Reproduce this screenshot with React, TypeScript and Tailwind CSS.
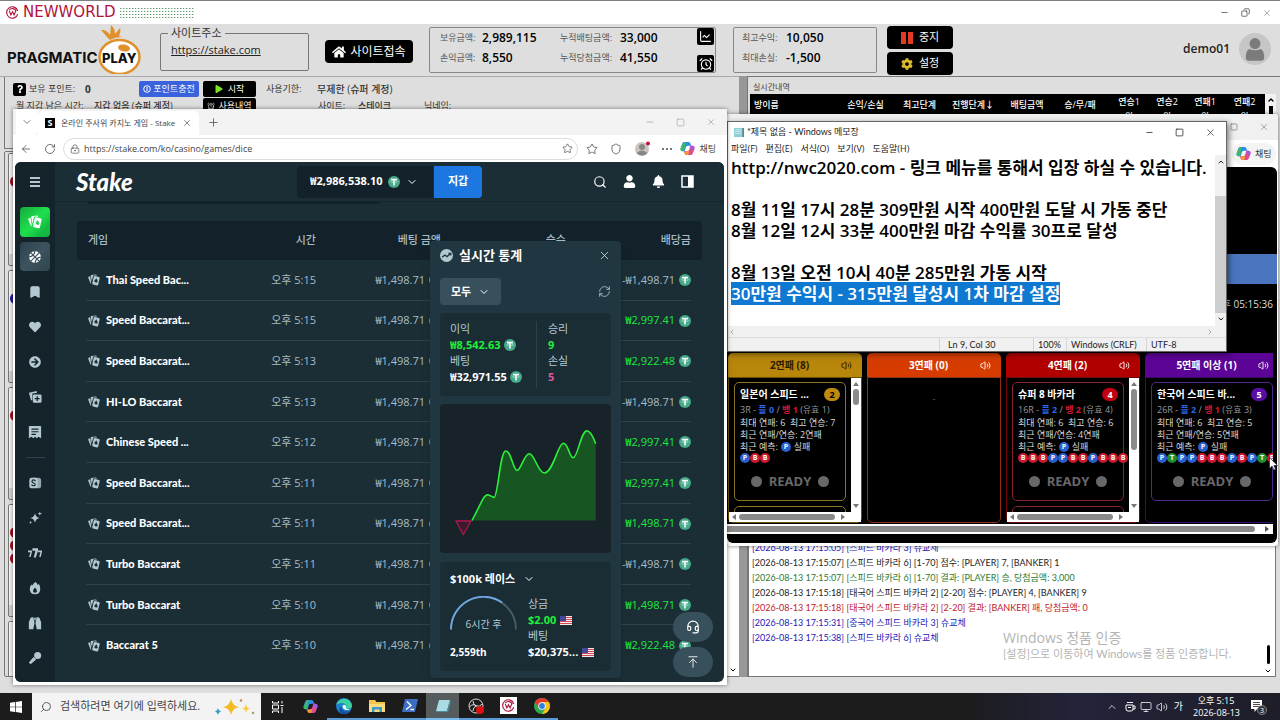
import { useEffect, useRef } from "react";
import type { ReactNode } from "react";
import {
  ArrowLeft,
  ArrowUpToLine,
  Bookmark,
  ChartLine,
  ChevronDown,
  ChevronLeft,
  ChevronRight,
  ChevronUp,
  AlarmClock,
  Copy,
  Headset,
  LockKeyhole,
  Minus,
  Monitor,
  Plus,
  RefreshCw,
  RotateCw,
  Search,
  Shield,
  Square,
  Star,
  Volume2,
  X,
} from "lucide-react";
import {
  FaBasketballBall,
  FaBell,
  FaCog,
  FaHeart,
  FaHome,
  FaPlay,
  FaQuestion,
  FaUser,
  FaArrowCircleRight,
} from "react-icons/fa";

type Bet = {
  game: string;
  time: string;
  payout: string;
  won: boolean;
};

const bets: Bet[] = [
  { game: "Thai Speed Bac...", time: "오후 5:15", payout: "-₩1,498.71", won: false },
  { game: "Speed Baccarat...", time: "오후 5:15", payout: "₩2,997.41", won: true },
  { game: "Speed Baccarat...", time: "오후 5:13", payout: "₩2,922.48", won: true },
  { game: "HI-LO Baccarat", time: "오후 5:13", payout: "-₩1,498.71", won: false },
  { game: "Chinese Speed ...", time: "오후 5:12", payout: "₩2,997.41", won: true },
  { game: "Speed Baccarat...", time: "오후 5:11", payout: "₩2,997.41", won: true },
  { game: "Speed Baccarat...", time: "오후 5:11", payout: "₩1,498.71", won: true },
  { game: "Turbo Baccarat", time: "오후 5:11", payout: "-₩1,498.71", won: false },
  { game: "Turbo Baccarat", time: "오후 5:10", payout: "₩1,498.71", won: true },
  { game: "Baccarat 5", time: "오후 5:10", payout: "₩2,922.48", won: true },
];

const logs = [
  { text: "[2026-08-13 17:15:05] [스피드 바카라 3] 슈교체", color: "text-[#2318b8]" },
  { text: "[2026-08-13 17:15:07] [스피드 바카라 6] [1-70] 점수: [PLAYER] 7, [BANKER] 1", color: "text-[#222222]" },
  { text: "[2026-08-13 17:15:07] [스피드 바카라 6] [1-70] 결과: [PLAYER] 승, 당첨금액: 3,000", color: "text-[#2c7a35]" },
  { text: "[2026-08-13 17:15:18] [태국어 스피드 바카라 2] [2-20] 점수: [PLAYER] 4, [BANKER] 9", color: "text-[#222222]" },
  { text: "[2026-08-13 17:15:18] [태국어 스피드 바카라 2] [2-20] 결과: [BANKER] 패, 당첨금액: 0", color: "text-[#c0202c]" },
  { text: "[2026-08-13 17:15:31] [중국어 스피드 바카라 3] 슈교체", color: "text-[#2318b8]" },
  { text: "[2026-08-13 17:15:38] [스피드 바카라 6] 슈교체", color: "text-[#2318b8]" },
];

const memo = [
  "http://nwc2020.com - 링크 메뉴를 통해서 입장 하실 수 있습니다.",
  "",
  "8월 11일 17시 28분 309만원 시작 400만원 도달 시 가동 중단",
  "8월 12일 12시 33분 400만원 마감 수익률 30프로 달성",
  "",
  "8월 13일 오전 10시 40분 285만원 가동 시작",
  "30만원 수익시 - 315만원 달성시 1차 마감 설정",
];

/* ---------- small drawings ---------- */

function Coin() {
  return (
    <svg viewBox="0 0 12 12" className="size-3 shrink-0">
      <circle cx="6" cy="6" r="6" fill="#45a98a" />
      <path d="M3 3.6h6M6 3.6V9.4" stroke="#fff" strokeWidth="1.5" />
      <ellipse cx="6" cy="5.6" rx="3.4" ry="0.9" fill="none" stroke="#e4f5ef" strokeWidth="0.5" />
    </svg>
  );
}

function Cards({ className }: { className: string }) {
  return (
    <svg viewBox="0 0 24 24" className={className} fill="currentColor">
      <path d="M.5 7.500q-.3-1.300.9-1.800L4.500 4.500 6.500 19q-1.300.3-1.900-1z" />
      <path d="M5.500 3.800q-.2-1.500 1.200-1.700L15.500.900q1.400-.1 1.700 1.200l.3 1.400-4.800-1q-2-.2-2.600 1.700L7.500 15z" />
      <path
        fillRule="evenodd"
        d="m13.600 4 8.400 2q1.800.500 1.400 2.300L20.300 21.500q-.5 1.700-2.300 1.400l-8-2q-1.800-.5-1.400-2.300L11.500 5.400q.4-1.700 2.100-1.400zM16.900 8.500l-4 4.500q-.8 2.800 2.600 3.800 3.400.700 4-1.800z"
      />
    </svg>
  );
}

function WMark({ className }: { className: string }) {
  return (
    <svg viewBox="0 0 16 16" className={className} fill="none" stroke="#b0123a" strokeWidth="1.4">
      <path d="M14.500 10A7 7 0 1 1 14.500 6M12.600 6.500A5 5 0 0 0 4 5" />
      <path d="m4 6 2 5 2-4 2 4 2-5" />
    </svg>
  );
}

function Copilot({ className }: { className: string }) {
  return (
    <svg viewBox="0 0 16 16" className={className}>
      <path d="M5 1h4c1.300 0 1.800.8 2.200 2L12 5H8.500C7 5 6.500 6 6.100 7.200L5 11H3C.8 11 .2 9.500.700 7.500l1.500-4.300C2.700 1.700 3.500 1 5 1z" fill="#2a8ee8" />
      <path d="M2 5c1-3 1.500-4 3-4h1L4.500 11H3C.8 11 .2 9.500.700 8z" fill="#3cb86a" />
      <path d="M11 15H7c-1.300 0-1.800-.8-2.200-2L4 11h3.500C9 11 9.500 10 9.900 8.800L11 5h2c2.200 0 2.800 1.500 2.300 3.500l-1.500 4.300c-.5 1.500-1.300 2.200-2.800 2.200z" fill="#e2498e" />
      <path d="M4.500 11.500h3c1.500 0 2-1.500 2.300-2.500L9 15H7c-1.300 0-2-.9-2.500-3.500z" fill="#f29b2e" />
      <path d="M11 5h2c2.200 0 2.800 1.500 2.300 3.500L14.500 11 10.500 7z" fill="#a558e0" />
    </svg>
  );
}

function PragmaticLogo() {
  return (
    <svg viewBox="0 0 134 50" className="h-[50px] w-[134px]" role="img" aria-label="Pragmatic Play">
      <path d="M101 14 94 6c5 0 7 2 9 5l1-10c3 3 4 5 4 9l5-6c1 3 0 5-1 8l3 1c-5 0-9 1-12 3z" fill="#e0912b" />
      <text x="0" y="39" fontFamily="Inter, sans-serif" fontWeight="700" fontSize="15" fill="#111">
        PRAGMATIC
      </text>
      <ellipse cx="112.500" cy="33" rx="20" ry="17" fill="#fff" stroke="#e0912b" strokeWidth="2.500" />
      <ellipse cx="117" cy="24" rx="6" ry="3.500" fill="#e0912b" transform="rotate(10 117 24)" />
      <text x="95" y="39" fontFamily="Inter, sans-serif" fontWeight="800" fontSize="13" fill="#111">
        PLAY
      </text>
    </svg>
  );
}

function Flag() {
  return (
    <svg viewBox="0 0 12 9" className="h-[9px] w-3 shrink-0">
      <path d="M0 0h12v9H0z" fill="#f5eaea" />
      <path d="M0 1.500h12M0 3.500h12M0 5.500h12M0 7.500h12" stroke="#d04a5a" />
      <path d="M0 0h6v5H0z" fill="#41479b" />
    </svg>
  );
}

/* ---------- betting bot (back window) ---------- */

function Stat({ label, value }: { label: string; value: string }) {
  return (
    <>
      <dt className="text-[#555555]">{label}</dt>
      <dd className="text-[12px] font-semibold text-black">{value}</dd>
    </>
  );
}

function BotHeader() {
  return (
    <header className="flex h-[52px] items-start pr-[9px] pl-[7px]">
      <PragmaticLogo />
      <fieldset className="ml-[19px] h-[47px] w-[149px] rounded-[2px] border border-[#777777] px-[7px]">
        <legend className="px-[3px] text-[11px] leading-[18px] text-[#333333]">사이트주소</legend>
        <a href="https://stake.com" className="ml-[3px] block text-[11px] leading-[16px] text-[#222222] underline">
          https://stake.com
        </a>
      </fieldset>
      <button className="mt-4 ml-4 flex h-[23px] w-[88px] items-center justify-center gap-1 rounded-[4px] bg-black text-[12px] text-white">
        <FaHome className="size-[14px]" />
        사이트접속
      </button>
      <div className="mt-[3px] ml-4 flex h-[46px] w-[287px] justify-between rounded-[2px] border border-[#888888] pl-[10px]">
        <dl className="grid grid-cols-[42px_78px_60px_60px] content-start text-[9px] leading-[20px]">
          <Stat label="보유금액:" value="2,989,115" />
          <Stat label="누적배팅금액:" value="33,000" />
          <Stat label="손익금액:" value="8,550" />
          <Stat label="누적당첨금액:" value="41,550" />
        </dl>
        <div className="flex flex-col justify-between pr-px">
          <button aria-label="차트" className="flex size-[17px] items-center justify-center rounded-[2px] bg-black text-white">
            <ChartLine className="size-[13px]" />
          </button>
          <button aria-label="알람" className="flex size-[17px] items-center justify-center rounded-[2px] bg-black text-white">
            <AlarmClock className="size-[14px]" />
          </button>
        </div>
      </div>
      <dl className="mt-[3px] ml-[17px] grid h-[46px] w-[144px] grid-cols-[44px_1fr] content-start rounded-[2px] border border-[#888888] pl-2 text-[9px] leading-[20px]">
        <Stat label="최고수익:" value="10,050" />
        <Stat label="최대손실:" value="-1,500" />
      </dl>
      <div className="mt-[2px] ml-[10px] flex flex-col gap-[3px]">
        <button className="flex h-[23px] w-[66px] items-center justify-center gap-[6px] rounded-[4px] bg-black text-[11px] text-white">
          <svg viewBox="0 0 12 12" className="size-3" fill="#e23a1e">
            <path d="M0 0h5v12H0zM7 0h5v12H7z" />
          </svg>
          중지
        </button>
        <button className="flex h-[23px] w-[66px] items-center justify-center gap-[6px] rounded-[4px] bg-black text-[11px] text-white">
          <FaCog className="size-3 text-[#d8b930]" />
          설정
        </button>
      </div>
      <div className="mt-[9px] ml-auto flex items-center gap-[9px]">
        <span className="text-[12px] font-semibold text-[#222222]">demo01</span>
        <span className="flex size-8 items-center justify-center rounded-full bg-[#c6c6c6]">
          <svg viewBox="0 0 22 26" className="h-[24px] w-[20px]" fill="#7b7b7b">
            <circle cx="11" cy="7" r="6" />
            <path d="M5 13q6 3 12 0 5 2 4 11-1 2-3 2H4q-2 0-3-2-1-9 4-11z" />
          </svg>
        </span>
      </div>
    </header>
  );
}

function RoomStub({ color, count }: { color: string; count: number }) {
  return (
    <div className="h-[113px] shrink-0 overflow-hidden rounded-[2px] border border-[#777777] bg-[#d4d4d4]">
      <div className="flex h-[100px] flex-col items-start gap-[2px] bg-[#f4f4f4] pt-[22px] pl-px">
        {Array.from({ length: count }, (_, i) => (
          <span key={i} className={`size-[11px] rounded-full ${color}`} />
        ))}
      </div>
    </div>
  );
}

function BotLeft() {
  return (
    <div className="flex min-w-0 flex-col overflow-hidden border-t border-[#aaaaaa] pl-1">
      <div className="h-[72px] border-b border-l border-[#777777] pt-1 pl-2 text-[10px] leading-[16px] text-[#333333]">
        <div className="flex h-4 items-center">
          <span className="flex size-[13px] items-center justify-center rounded-[2px] bg-black text-white">
            <FaQuestion className="size-[8px]" />
          </span>
          <span className="ml-[3px] w-[56px] text-[9px]">보유 포인트:</span>
          <b className="w-[54px]">0</b>
          <button className="flex h-4 w-[60px] items-center justify-center gap-[2px] rounded-[2px] bg-[#3a62dc] text-[9px] text-white">
            <svg viewBox="0 0 8 8" className="size-2" fill="none" stroke="#fff">
              <circle cx="4" cy="4" r="3.300" />
              <path d="M4 2v4" />
            </svg>
            포인트충전
          </button>
          <button className="ml-1 flex h-4 w-[53px] items-center justify-center gap-[5px] rounded-[2px] bg-black text-[9px] text-white">
            <FaPlay className="size-2 text-[#7be321]" />
            시작
          </button>
          <span className="ml-[10px] w-[51px] text-[9px]">사용기한:</span>
          <span className="font-medium">무제한 (슈퍼 계정)</span>
        </div>
        <div className="mt-px flex h-4 items-center">
          <span className="ml-[3px] w-[78px] text-[9px]">월 지갑 남은 시간:</span>
          <span className="w-[109px] text-[9px] font-medium">지갑 없음 (슈퍼 계정)</span>
          <button className="flex h-4 w-[53px] items-center justify-center gap-[3px] rounded-[2px] bg-black text-white">
            <AlarmClock className="size-2" />
            <span className="text-[9px]">사용내역</span>
          </button>
          <span className="ml-[62px] w-[40px] text-[9px]">사이트:</span>
          <span className="w-[66px] text-[9px] font-medium">스테이크</span>
          <span className="text-[9px]">닉네임:</span>
        </div>
      </div>
      <div className="mt-[2px] flex min-h-0 flex-1">
        <div className="flex flex-1 flex-col gap-1 overflow-hidden rounded-[2px] border border-[#777777] pt-px pl-[3px]">
          <RoomStub color="bg-[#a30d20]" count={1} />
          <RoomStub color="bg-[#1c14a8]" count={1} />
          <RoomStub color="bg-[#a30d20]" count={1} />
          <RoomStub color="bg-[#a30d20]" count={3} />
          <RoomStub color="bg-[#a30d20]" count={0} />
        </div>
        <div className="flex w-3 flex-col items-center justify-end border-b border-[#777777] bg-white pb-[2px]">
          <ChevronDown className="size-2 text-black" strokeWidth={3} />
        </div>
      </div>
    </div>
  );
}

function BotRight() {
  return (
    <div className="flex min-w-0 flex-col overflow-hidden border-t border-l border-[#777777] pr-1">
      <p className="h-[17px] pt-1 pl-[5px] text-[8px] leading-[12px] text-[#444444]">실시간내역</p>
      <div className="flex pl-[2px]">
        <table className="h-[34px] flex-1 table-fixed bg-black text-[9px] leading-[15px] text-white">
          <thead>
            <tr className="[&>th]:align-top [&>th]:font-medium">
              <th className="w-[84px] pt-[3px] pl-1 text-left">방이름</th>
              <th className="w-[63px] pt-[3px]">손익/손실</th>
              <th className="w-[45px] pt-[3px]">최고단계</th>
              <th className="w-[62px] pt-[3px]">진행단계↓</th>
              <th className="w-[46px] pt-[3px]">배팅금액</th>
              <th className="w-[60px] pt-[3px]">승/무/패</th>
              <th className="w-[38px]">연승1<br />위</th>
              <th className="w-[38px]">연승2<br />위</th>
              <th className="w-[38px]">연패1<br />위</th>
              <th>연패2<br />위</th>
            </tr>
          </thead>
        </table>
        <div className="flex w-[11px] flex-col items-center bg-[#f2f2f2]">
          <ChevronUp className="my-[2px] size-2 text-black" strokeWidth={4} />
          <span className="w-1 flex-1 bg-black" />
        </div>
      </div>
      <div className="mt-auto flex h-[272px] border border-[#777777] bg-white">
        <div className="flex-1 pt-[134px] pl-[3px] font-['Lato','Noto_Sans_CJK_KR',sans-serif] text-[9px] leading-[15px]">
          {logs.map((log) => (
            <p key={log.text} className={log.color}>
              {log.text}
            </p>
          ))}
        </div>
        <div className="flex w-[14px] flex-col items-center justify-end gap-[3px] pb-px">
          <span className="h-[19px] w-[3px] rounded-full bg-black" />
          <ChevronDown className="size-2 text-black" strokeWidth={3} />
        </div>
      </div>
    </div>
  );
}

function BotWindow() {
  return (
    <main className="flex min-h-0 flex-1 flex-col border-t border-[#808080] bg-[#dedede] pb-4">
      <div className="flex h-[23px] shrink-0 items-center bg-white pr-2 pl-[6px]">
        <WMark className="size-[13px]" />
        <span className="ml-1 font-['DejaVu_Sans',sans-serif] text-[15px] leading-[23px] text-[#b0123a]">NEWWORLD</span>
        <svg className="ml-[4px] h-[10px] w-[74px]">
          <defs>
            <pattern id="dots" width="3" height="3" patternUnits="userSpaceOnUse">
              <rect width="1" height="1" fill="#5f9a6a" />
              <rect x="1" width="1" height="1" fill="#c4d8c8" />
            </pattern>
          </defs>
          <rect width="74" height="10" fill="url(#dots)" />
        </svg>
        <div className="ml-auto flex gap-3 text-[#444444]">
          <button aria-label="최소화"><Minus className="size-[9px]" /></button>
          <button aria-label="이전 크기"><Copy className="size-[9px] -scale-x-100" /></button>
          <button aria-label="닫기"><X className="size-[10px]" strokeWidth={1} /></button>
        </div>
      </div>
      <BotHeader />
      <div className="grid min-h-0 flex-1 grid-cols-[739fr_8px_533fr]">
        <BotLeft />
        <div className="bg-[#989898]" />
        <BotRight />
      </div>
    </main>
  );
}

/* ---------- browser with the casino page ---------- */

const sideIcons: { name: string; icon: ReactNode }[] = [
  { name: "즐겨찾기", icon: <Bookmark className="size-[14px]" fill="currentColor" /> },
  { name: "좋아요", icon: <FaHeart className="size-[12px]" /> },
  { name: "계속 플레이", icon: <FaArrowCircleRight className="size-[12px]" /> },
  {
    name: "챌린지",
    icon: (
      <svg viewBox="0 0 16 16" className="size-[14px]" fill="currentColor">
        <path d="M1 3 10 1v2.500L5 4v7L3.500 12z" />
        <path fillRule="evenodd" d="M7 5h7q1.500 0 1.500 1.500V13q0 1.500-1.500 1.500H7Q5.500 14.500 5.500 13V6.500Q5.500 5 7 5zm2.800 2v2h-2v1.500h2v2h1.500v-2h2V9h-2V7z" />
      </svg>
    ),
  },
  {
    name: "내 베팅",
    icon: (
      <svg viewBox="0 0 16 16" className="size-[14px]" fill="currentColor">
        <path fillRule="evenodd" d="M2 1h12q1 0 1 1v13l-3-1.500-2 1.500-2-1.500L6 15l-2-1.500L1 15V2q0-1 1-1zm2 3v1.300h8V4zm0 3v1.300h8V7zm0 3v1.300h5V10z" />
      </svg>
    ),
  },
];

const gameIcons: { name: string; icon: ReactNode }[] = [
  {
    name: "오리지널",
    icon: (
      <svg viewBox="0 0 16 16" className="size-[14px]">
        <path d="M5 2h7q3 0 3 3v6q0 3-3 3H9z" fill="currentColor" opacity=".8" />
        <path d="M3.500 2h5Q11 2 11 5v6q0 3-2.500 3h-5Q1.500 14 1.500 11V5q0-3 2-3z" fill="currentColor" />
        <path d="M8.500 6q-.5-1.500-2.200-1.500T4.500 6.200C4.500 8.300 8.300 7.500 8.300 9.700q0 1.500-2 1.500T4.200 9.700" fill="none" stroke="#15242b" strokeWidth="1.300" />
      </svg>
    ),
  },
  {
    name: "신규",
    icon: (
      <svg viewBox="0 0 16 16" className="size-[14px]" fill="currentColor">
        <path d="M8 2.500q.8 4.700 5.500 5.500Q8.800 8.800 8 13.500 7.200 8.800 2.500 8 7.200 7.200 8 2.500zM13.500.500l.6 1.900 1.900.6-1.900.6-.6 1.900-.6-1.900L11 3l1.900-.6zM3 11l.5 1.500 1.500.5-1.500.5L3 15l-.5-1.500L1 13l1.500-.5z" />
      </svg>
    ),
  },
  {
    name: "슬롯",
    icon: (
      <svg viewBox="0 0 16 16" className="size-[14px]" fill="currentColor">
        <path d="M5 2.500h6.500V5L9 13H6.500l2-7.500H5zM0 5h4.500v1.800L3 12.500H1.300L2.700 7H0zM11.500 5H16v1.800l-1.500 5.700h-1.700L14.200 7h-2.700z" />
      </svg>
    ),
  },
  {
    name: "인기",
    icon: (
      <svg viewBox="0 0 16 16" className="size-[14px]" fill="currentColor">
        <path fillRule="evenodd" d="M8.500 1Q10.500 2 11 4.500q1-.3 1.300-1.300Q14 5.500 14 9q0 6-6 6T2 9q0-3 2-5l1 1.200Q6 2.500 8.500 1zM8 7.500Q5.700 10 5.700 11.500 5.800 13.500 8 13.500t2.300-2Q10.300 10 8 7.500z" />
      </svg>
    ),
  },
  {
    name: "게임쇼",
    icon: (
      <svg viewBox="0 0 16 16" className="size-[14px]" fill="currentColor">
        <path d="M3 2 6 1 7.500 8 6 15H1V7zM13 2l-3-1L8.500 8 10 15h5V7zM6.800 2h2.400L8.500 5h-1z" />
      </svg>
    ),
  },
  {
    name: "라이브",
    icon: (
      <svg viewBox="0 0 16 16" className="size-[14px]" fill="currentColor">
        <circle cx="11" cy="5" r="4" />
        <path d="m6.300 6.800 3 3L3 15l-2-2z" />
      </svg>
    ),
  },
];

function Sidebar() {
  return (
    <nav className="flex w-[40px] shrink-0 flex-col items-center bg-[#15242b] text-[#b3c8d1]">
      <button aria-label="메뉴" className="flex h-10 items-center">
        <svg viewBox="0 0 10 10" className="size-[10px]" stroke="currentColor" strokeWidth="2">
          <path d="M0 1h10M0 5h10M0 9h10" />
        </svg>
      </button>
      <button aria-label="카지노" className="mt-[5px] flex h-[30px] w-[30px] items-center justify-center rounded-[4px] bg-[linear-gradient(135deg,#17a83c,#1fe04e_50%,#14b840_80%)] text-white">
        <Cards className="size-[14px]" />
      </button>
      <button aria-label="스포츠" className="mt-[5px] flex h-[29px] w-[30px] items-center justify-center rounded-[4px] bg-[linear-gradient(135deg,#2c414b,#3d545f_50%,#2e444e)] text-white">
        <FaBasketballBall className="size-[12px]" />
      </button>
      <ul className="mt-[3px] flex flex-col items-center">
        {sideIcons.map((item) => (
          <li key={item.name} className="flex h-[35px] items-center">
            <button aria-label={item.name}>{item.icon}</button>
          </li>
        ))}
      </ul>
      <hr className="mt-[8px] mb-[7px] w-[19px] border-[#2f434c]" />
      <ul className="flex flex-col items-center">
        {gameIcons.map((item) => (
          <li key={item.name} className="flex h-[35px] items-center">
            <button aria-label={item.name}>{item.icon}</button>
          </li>
        ))}
      </ul>
    </nav>
  );
}

function CasinoTopbar() {
  return (
    <div className="flex h-10 shrink-0 items-center border-b border-[#15252c] bg-[#1b2d35] pr-[30px] pl-[21px] text-white">
      <a href="#home" className="w-[221px] font-['Lato',sans-serif] text-[24px] leading-[30px] font-black italic">
        Stake
      </a>
      <button className="flex h-8 w-[136px] items-center rounded-l-[4px] bg-[#13222a] pl-[13px] text-[11px] font-bold">
        ₩2,986,538.10
        <span className="ml-[5px]"><Coin /></span>
        <ChevronDown className="ml-[6px] size-3" />
      </button>
      <button className="ml-px h-8 w-12 rounded-r-[4px] bg-[#1c78e0] text-[11px] font-semibold">지갑</button>
      <div className="ml-auto flex items-center gap-[16px]">
        <button aria-label="검색"><Search className="size-[14px]" /></button>
        <button aria-label="프로필"><FaUser className="size-[13px]" /></button>
        <button aria-label="알림"><FaBell className="size-[13px]" /></button>
        <button aria-label="사이드 패널">
          <svg viewBox="0 0 13 13" className="size-[13px]">
            <path d="M1 1h11v11H1z" fill="none" stroke="#fff" strokeWidth="1.500" />
            <path d="M7 1h5v11H7z" fill="#fff" />
          </svg>
        </button>
      </div>
    </div>
  );
}

function BetTable() {
  return (
    <table className="h-[445px] w-full table-fixed border-separate border-spacing-0 text-[11px] text-[#a9bcc5]">
      <thead>
        <tr className="h-[39px] [&>th]:bg-[#13222a] [&>th]:font-medium">
          <th className="w-[140px] rounded-l-[4px] pl-[11px] text-left">게임</th>
          <th className="w-[99px] text-right">시간</th>
          <th className="w-[125px] text-right">베팅 금액</th>
          <th className="w-[125px] text-right">승수</th>
          <th className="rounded-r-[4px] pr-[11px] text-right">배당금</th>
        </tr>
      </thead>
      <tbody>
        {bets.map((bet, i) => (
          <tr key={i} className="[&>td]:p-0 [&>td]:align-bottom [&:last-child_div]:border-transparent">
            <td>
              <div className="ml-[9px] flex h-10 items-center gap-[6px] border-b border-[#30434c] pl-[2px] font-['Lato',sans-serif] font-black text-white">
                <Cards className="size-3 text-[#b3c8d1]" />
                {bet.game}
              </div>
            </td>
            <td>
              <div className="flex h-10 items-center justify-end border-b border-[#30434c]">{bet.time}</div>
            </td>
            <td>
              <div className="flex h-10 items-center justify-end gap-1 border-b border-[#30434c]">
                ₩1,498.71 <Coin />
              </div>
            </td>
            <td>
              <div className="h-10 border-b border-[#30434c]" />
            </td>
            <td>
              <div className="mr-[11px] flex h-10 items-center justify-end gap-1 border-b border-[#30434c]">
                <span className={bet.won ? "font-medium text-[#1fe83a]" : ""}>{bet.payout}</span>
                <Coin />
              </div>
            </td>
          </tr>
        ))}
      </tbody>
    </table>
  );
}

function LiveStats() {
  return (
    <section className="absolute top-[79px] left-[415px] flex h-[437px] w-[191px] flex-col rounded-[4px] bg-[#203640] px-[10px] text-[11px] leading-4 text-[#b3c8d1] shadow-lg">
      <div className="flex h-[28px] items-center gap-[6px] text-white">
        <svg viewBox="0 0 12 12" className="size-[13px]">
          <circle cx="6" cy="6" r="6" fill="#b3c8d1" />
          <path d="m2 7.500 2.500-2 2 1.500L10 4M7.700 4H10v2" fill="none" stroke="#203640" strokeWidth="1.200" />
        </svg>
        <h2 className="text-[13px] font-semibold">실시간 통계</h2>
        <button aria-label="닫기" className="ml-auto"><X className="size-[13px] text-[#d5e2e8]" strokeWidth={1.5} /></button>
      </div>
      <div className="mt-[9px] flex items-center justify-between">
        <button className="flex h-[27px] w-[61px] items-center justify-center gap-[7px] rounded-[4px] bg-[#38505b] font-semibold text-white">
          모두 <ChevronDown className="size-3" />
        </button>
        <button aria-label="새로고침"><RefreshCw className="size-[13px]" strokeWidth={1.5} /></button>
      </div>
      <div className="mt-2 flex h-[83px] rounded-[4px] bg-[#1a2c34] py-2 pl-[10px]">
        <div className="w-[87px] border-r border-[#2b414c]">
          <p>이익</p>
          <p className="flex items-center gap-[3px] font-bold text-[#1ff03a]">₩8,542.63 <Coin /></p>
          <p>베팅</p>
          <p className="flex items-center gap-[3px] font-bold text-white">₩32,971.55 <Coin /></p>
        </div>
        <div className="pl-[11px]">
          <p>승리</p>
          <p className="font-bold text-[#1ff03a]">9</p>
          <p>손실</p>
          <p className="font-bold text-[#e0589c]">5</p>
        </div>
      </div>
      <svg viewBox="0 0 171 149" className="mt-2 h-[149px] w-[171px] shrink-0 rounded-[4px] bg-[#182329]">
        <path
          d="M32 116.500 43 95Q46 90 48.500 91T54 93.500C58 93 60 47 65.700 47S73 66 77 66.300 84 49.700 89.300 49.700 98 69 104.300 69C113 69 118 39.300 123.300 39.300S129 53.700 133.300 53.700 141 26.700 147 26.700Q151 27 155.700 39.700V116.500z"
          fill="#175623"
        />
        <path
          d="M32 116.500 43 95Q46 90 48.500 91T54 93.500C58 93 60 47 65.700 47S73 66 77 66.300 84 49.700 89.300 49.700 98 69 104.300 69C113 69 118 39.300 123.300 39.300S129 53.700 133.300 53.700 141 26.700 147 26.700Q151 27 155.700 39.700"
          fill="none"
          stroke="#2bf03c"
          strokeWidth="1.600"
        />
        <path d="M16 117h15l-7.700 13.500z" fill="#3a1a2c" stroke="#b3164f" strokeWidth="1.300" />
      </svg>
      <div className="mt-[9px] flex h-[109px] flex-col rounded-[4px] bg-[#1a2c34] pt-[9px] pl-[10px]">
        <button className="flex items-center gap-2 font-bold text-white">
          $100k 레이스 <ChevronDown className="size-3" />
        </button>
        <div className="mt-[9px] flex gap-[11px]">
          <div className="w-[67px]">
            <div className="flex h-[48px] flex-col">
              <svg viewBox="0 0 67 34" className="h-[34px] w-[67px]" fill="none" strokeWidth="1.800">
                <path d="M1 33.500a32.500 32.500 0 0 1 65 0" stroke="#46606d" />
                <path d="M1 33.500A32.500 32.500 0 0 1 52 6.500" stroke="#6fa8e6" />
              </svg>
              <p className="-mt-[14px] text-center text-[10px]">6시간 후</p>
            </div>
            <p className="text-[10px] font-bold text-white">2,559th</p>
          </div>
          <div>
            <p>상금</p>
            <p className="flex items-center gap-1 font-bold text-[#1ff03a]">$2.00 <Flag /></p>
            <p>베팅</p>
            <p className="flex items-center gap-1 font-bold text-white">$20,375... <Flag /></p>
          </div>
        </div>
      </div>
    </section>
  );
}

function BrowserWindow() {
  return (
    <div className="absolute top-[109px] left-[13px] flex h-[576px] w-[714px] flex-col bg-white pr-[3px] pb-[3px] pl-[2px] shadow-[0_0_4px_rgba(0,0,0,0.5)]">
      <div className="-mr-[3px] -ml-[2px] flex h-[26px] shrink-0 items-center bg-[#f3f3f3] pl-[3px]">
        <button aria-label="탭 목록" className="flex h-full w-[22px] items-center justify-center rounded-br-[5px] bg-white">
          <ChevronDown className="size-3 text-[#555555]" strokeWidth={1.5} />
        </button>
        <div className="flex h-6 w-[161px] items-center self-end rounded-t-[5px] bg-white px-[7px]">
          <span className="flex size-[10px] shrink-0 items-center justify-center bg-black text-[9px] font-bold text-white">S</span>
          <span className="ml-[6px] flex-1 text-[8px] whitespace-nowrap text-[#444444]">온라인 주사위 카지노 게임 - Stake</span>
          <button aria-label="탭 닫기"><X className="size-[10px] text-[#444444]" strokeWidth={1.5} /></button>
        </div>
        <button aria-label="새 탭" className="ml-2"><Plus className="size-[13px] text-[#555555]" strokeWidth={1.5} /></button>
        <div className="ml-auto flex gap-[21px] pr-[11px] text-[#999999]">
          <button aria-label="최소화"><Minus className="size-[10px]" strokeWidth={1.5} /></button>
          <button aria-label="최대화"><Square className="size-[9px]" strokeWidth={1.5} /></button>
          <button aria-label="닫기"><X className="size-[10px]" strokeWidth={1.5} /></button>
        </div>
      </div>
      <div className="flex h-[27px] shrink-0 items-center pr-2 pl-[5px] text-[#444444]">
        <button aria-label="뒤로"><ArrowLeft className="size-3" strokeWidth={1.5} /></button>
        <button aria-label="새로 고침" className="ml-3"><RotateCw className="size-3" strokeWidth={1.5} /></button>
        <div className="ml-[7px] flex h-[22px] w-[515px] items-center rounded-full border border-[#dddddd] pr-1 pl-[6px]">
          <LockKeyhole className="size-[10px]" strokeWidth={1.5} />
          <input aria-label="주소" readOnly value="https://stake.com/ko/casino/games/dice" className="ml-1 flex-1 text-[9px] outline-none" />
          <Star className="size-[11px]" strokeWidth={1.5} />
        </div>
        <div className="ml-[8px] flex items-center gap-3">
          <Star className="size-3" strokeWidth={1.5} />
          <Shield className="size-3" strokeWidth={1.5} />
          <svg viewBox="0 0 16 16" className="size-4">
            <circle cx="8" cy="8" r="7" fill="#c9c4c0" />
            <circle cx="8" cy="6" r="3" fill="#8a8683" />
            <path d="M2.500 12q5.500-5 11 0-5.500 5-11 0z" fill="#8a8683" />
            <circle cx="14" cy="2.500" r="2" fill="#c0103a" />
          </svg>
          <svg viewBox="0 0 10 2" className="h-[2px] w-[10px]" fill="#777">
            <path d="M0 0h2v2H0zM4 0h2v2H4zM8 0h2v2H8z" />
          </svg>
        </div>
        <button className="ml-auto flex items-center gap-1 text-[9px]">
          <Copilot className="size-[15px]" />
          채팅
        </button>
      </div>
      <div className="relative flex min-h-0 flex-1 overflow-hidden rounded-[6px] bg-[#1b2e35]">
        <Sidebar />
        <div className="flex min-w-0 flex-1 flex-col">
          <CasinoTopbar />
          <div className="ml-[33px] h-[2px] w-[292px] shrink-0 rounded-b-full bg-[#13222a]" />
          <div className="mt-[17px] px-[22px]">
            <BetTable />
          </div>
        </div>
        <LiveStats />
        <div className="absolute right-[11px] bottom-[5px] flex flex-col gap-[5px] text-white">
          <button aria-label="고객 지원" className="flex h-[30px] w-10 items-center justify-center rounded-full bg-[#38505b]">
            <Headset className="size-[14px]" />
          </button>
          <button aria-label="맨 위로" className="flex h-[30px] w-10 items-center justify-center rounded-full bg-[#38505b]">
            <ArrowUpToLine className="size-[14px]" strokeWidth={1.5} />
          </button>
        </div>
      </div>
    </div>
  );
}

/* ---------- losing streak board ---------- */

type Room = {
  name: string;
  streak: number;
  round: string;
  player: number;
  banker: number;
  valid: number;
  maxLose: number;
  maxWin: number;
  road: string;
};

type Lane = {
  title: string;
  head: string;
  frame: string;
  card: string;
  badge: string;
  scroll: boolean;
  room?: Room;
};

const lanes: Lane[] = [
  {
    title: "2연패 (8)",
    head: "bg-[#b8860b] text-[#2a1c00]",
    frame: "border-[#6b4f08]",
    card: "border-[#8a7526]",
    badge: "bg-[#c08a10] text-black",
    scroll: true,
    room: { name: "일본어 스피드 ...", streak: 2, round: "3R", player: 0, banker: 1, valid: 1, maxLose: 6, maxWin: 7, road: "PBB" },
  },
  {
    title: "3연패 (0)",
    head: "bg-[#d63c00] text-white",
    frame: "border-[#8f2f1a]",
    card: "",
    badge: "",
    scroll: false,
  },
  {
    title: "4연패 (2)",
    head: "bg-[#b00000] text-white",
    frame: "border-[#6e0c14]",
    card: "border-[#8a2230]",
    badge: "bg-[#c00010] text-white",
    scroll: true,
    room: { name: "슈퍼 8 바카라", streak: 4, round: "16R", player: 2, banker: 2, valid: 4, maxLose: 6, maxWin: 6, road: "BBBPPBBPBBB" },
  },
  {
    title: "5연패 이상 (1)",
    head: "bg-[#5b0496] text-white",
    frame: "border-[#34106a]",
    card: "border-[#4e2a8c]",
    badge: "bg-[#5b0ca8] text-white",
    scroll: false,
    room: { name: "한국어 스피드 바...", streak: 5, round: "26R", player: 2, banker: 1, valid: 3, maxLose: 6, maxWin: 5, road: "PTPPBBBPBPTB" },
  },
];

const roadColor: Record<string, string> = {
  P: "bg-[#2860d0]",
  B: "bg-[#d01830]",
  T: "bg-[#1f9030]",
};

function RoadDot({ value }: { value: string }) {
  return (
    <span className={`flex size-[10px] shrink-0 items-center justify-center rounded-full text-[7px] leading-[10px] font-bold text-white ${roadColor[value]}`}>
      {value}
    </span>
  );
}

function RoomCard({ room, card, badge }: { room: Room; card: string; badge: string }) {
  return (
    <article className={`h-[119px] shrink-0 rounded-[5px] border px-[5px] pt-1 text-[9px] text-[#d8d8d8] ${card}`}>
      <div className="flex h-[15px] items-center justify-between">
        <h3 className="text-[10px] font-bold whitespace-nowrap text-white">{room.name}</h3>
        <span className={`flex h-[13px] w-4 items-center justify-center rounded-full text-[9px] font-bold ${badge}`}>{room.streak}</span>
      </div>
      <p className="leading-[15px] whitespace-nowrap text-[#999999]">
        {room.round} - <b className="text-[#2a62e0]">플 {room.player}</b> / <b className="text-[#d01830]">뱅 {room.banker}</b> (유효 {room.valid})
      </p>
      <p className="leading-[12px] whitespace-nowrap">
        최대 연패: {room.maxLose}&nbsp; 최고 연승: {room.maxWin}
      </p>
      <p className="leading-[12px]">최근 연패/연승: {room.streak}연패</p>
      <p className="flex items-center gap-[3px] leading-[12px]">
        최근 예측: <RoadDot value="P" /> 실패
      </p>
      <div className="flex">
        {room.road.split("").map((value, i) => (
          <RoadDot key={i} value={value} />
        ))}
      </div>
      <p className="mt-[9px] flex items-center justify-center gap-[7px] text-[13px] leading-[18px] font-bold text-[#686868]">
        <span className="size-[11px] rounded-full bg-[#686868]" />
        READY
        <span className="size-[11px] rounded-full bg-[#686868]" />
      </p>
    </article>
  );
}

function LaneColumn({ lane }: { lane: Lane }) {
  return (
    <section className="flex h-[170px] w-[134px] shrink-0 flex-col">
      <header className={`flex h-6 shrink-0 items-center rounded-t-[5px] pr-[10px] pl-[10px] text-[10px] font-bold ${lane.head}`}>
        <h2 className="flex-1 text-center">{lane.title}</h2>
        <button aria-label="소리"><Volume2 className="size-[11px]" /></button>
      </header>
      <div className={`flex min-h-0 flex-1 rounded-b-[5px] border ${lane.frame}`}>
        <div className="flex min-w-0 flex-1 flex-col">
          <div className="flex min-h-0 flex-1 flex-col gap-[5px] overflow-hidden px-[5px] pt-1">
            {lane.room ? <RoomCard room={lane.room} card={lane.card} badge={lane.badge} /> : <p className="pt-[10px] text-center text-[9px] text-[#666666]">-</p>}
            {lane.scroll && <div className={`h-8 shrink-0 rounded-[5px] border ${lane.card}`} />}
          </div>
          {lane.scroll && (
            <div className="flex h-[10px] items-center gap-[3px] bg-white px-[3px] text-[#777777]">
              <svg viewBox="0 0 4 6" className="h-[6px] w-1" fill="currentColor"><path d="M4 0v6L0 3z" /></svg>
              <span className="h-[6px] flex-1 rounded-full bg-[#8a8a8a]" />
              <svg viewBox="0 0 4 6" className="mx-[3px] h-[6px] w-1" fill="currentColor"><path d="M0 0v6l4-3z" /></svg>
            </div>
          )}
        </div>
        {lane.scroll && (
          <div className="flex w-[10px] flex-col items-center bg-white pt-1 pb-[14px] text-[#777777]">
            <svg viewBox="0 0 6 4" className="h-1 w-[6px]" fill="currentColor"><path d="M0 4h6L3 0z" /></svg>
            <span className={`mt-[3px] w-[6px] rounded-full bg-[#8a8a8a] ${lane.title === "2연패 (8)" ? "h-4" : "h-[61px]"}`} />
            <svg viewBox="0 0 6 4" className="mt-auto h-1 w-[6px]" fill="currentColor"><path d="M0 0h6L3 4z" /></svg>
          </div>
        )}
      </div>
    </section>
  );
}

function BoardWindow() {
  return (
    <div className="absolute top-[114px] right-[2px] left-[727px] flex h-[432px] flex-col overflow-hidden rounded-[3px] bg-white shadow-[0_0_4px_rgba(0,0,0,0.5)]">
      <div className="flex h-[26px] shrink-0 items-center justify-end gap-[21px] bg-[#f0f0f0] pr-[9px] text-[#777777]">
        <Square className="size-[8px]" strokeWidth={2} />
        <X className="size-[10px]" strokeWidth={1.5} />
      </div>
      <div className="flex h-[27px] shrink-0 items-center justify-end pr-[2px]">
        <button className="flex h-[22px] w-[44px] items-center gap-1 rounded-full bg-[#f4f4f4] pl-1 text-[9px] text-[#333333]">
          <Copilot className="size-[15px]" />
          채팅
        </button>
      </div>
      <div className="mr-px mb-[3px] flex min-h-0 flex-1 flex-col rounded-[6px] rounded-tl-none bg-black">
        <div className="mt-[87px] h-[30px] shrink-0 bg-[#4a76c0]" />
        <p className="mt-[11px] pr-1 text-right text-[10px] leading-[18px] text-[#dddddd]">오후 05:15:36</p>
        <div className="mt-[40px] mr-1 flex gap-[5px] overflow-hidden pl-px">
          {lanes.map((lane) => (
            <LaneColumn key={lane.title} lane={lane} />
          ))}
        </div>
        <div className="mt-px mr-1 flex h-[10px] shrink-0 items-center bg-white pr-1">
          <span className="h-[6px] flex-1 rounded-r-full bg-[#8a8a8a]" />
          <svg viewBox="0 0 4 6" className="ml-[10px] h-[6px] w-1" fill="#555"><path d="M0 0v6l4-3z" /></svg>
        </div>
      </div>
    </div>
  );
}

/* ---------- notepad ---------- */

function Notepad() {
  const area = useRef<HTMLTextAreaElement>(null);

  useEffect(() => {
    const text = memo.join("\n");
    area.current?.focus({ preventScroll: true });
    area.current?.setSelectionRange(text.length - memo[memo.length - 1].length, text.length);
  }, []);

  return (
    <div className="absolute top-[121px] left-[727px] flex h-[231px] w-[500px] flex-col border border-[#666666] bg-white text-[9px] text-[#222222] shadow-[2px_2px_6px_rgba(0,0,0,0.5)]">
      <div className="flex h-5 shrink-0 items-center pr-[10px] pl-[5px]">
        <svg viewBox="0 0 12 12" className="size-[11px]">
          <path d="M1 1h9v10H1z" fill="#8ccfd4" />
          <path d="M10 1h2v10h-2z" fill="#4a8f98" />
          <path d="M2 3h7M2 5h7M2 7h7" stroke="#fff" strokeWidth=".6" />
        </svg>
        <span className="ml-[3px] font-['Lato','Noto_Sans_CJK_KR',sans-serif]">*제목 없음 - Windows 메모장</span>
        <div className="ml-auto flex gap-[21px]">
          <button aria-label="최소화"><Minus className="size-[9px]" /></button>
          <button aria-label="최대화"><Square className="size-[9px]" /></button>
          <button aria-label="닫기"><X className="size-[11px]" strokeWidth={1.5} /></button>
        </div>
      </div>
      <div className="flex h-[13px] shrink-0 items-center gap-2 pl-[3px] leading-[13px]">
        <button>파일(F)</button>
        <button>편집(E)</button>
        <button>서식(O)</button>
        <button>보기(V)</button>
        <button>도움말(H)</button>
      </div>
      <div className="flex min-h-0 flex-1">
        <textarea
          ref={area}
          aria-label="메모"
          readOnly
          spellCheck={false}
          wrap="off"
          value={memo.join("\n")}
          className="min-w-0 flex-1 resize-none overflow-hidden pt-[2px] pl-[3px] text-[17px] leading-[21px] font-semibold text-black caret-transparent outline-none selection:bg-[#0f78d0] selection:text-white"
        />
        <div className="flex w-[11px] flex-col items-center bg-[#f0f0f0] py-[3px]">
          <ChevronUp className="size-2" strokeWidth={3} />
          <span className="mt-[30px] w-full flex-1 bg-[#cdcdcd]" />
          <ChevronDown className="mt-[2px] size-2" strokeWidth={3} />
        </div>
      </div>
      <div className="flex h-[11px] shrink-0 items-center justify-between bg-[#f0f0f0] pr-3 text-[#aaaaaa]">
        <ChevronLeft className="size-2" strokeWidth={3} />
        <ChevronRight className="size-2" strokeWidth={3} />
      </div>
      <div className="flex h-[14px] shrink-0 items-center justify-end border-t border-[#dddddd] bg-[#f0f0f0] font-['Lato',sans-serif] leading-[13px] *:border-l *:border-[#d5d5d5]">
        <span className="w-[94px] pl-2">Ln 9, Col 30</span>
        <span className="w-[33px] pl-1">100%</span>
        <span className="w-[80px] pl-1">Windows (CRLF)</span>
        <span className="w-[80px] pl-1">UTF-8</span>
      </div>
    </div>
  );
}

/* ---------- taskbar ---------- */

function TaskIcon({ name, state, children }: { name: string; state?: "open" | "active"; children: ReactNode }) {
  return (
    <button
      aria-label={name}
      className={`flex h-full w-[33px] items-center justify-center ${state === "active" ? "border-b-2 border-[#76b9ed] bg-[#565b5e]" : state === "open" ? "border-b-2 border-[#5b9bd5]" : ""}`}
    >
      {children}
    </button>
  );
}

function Taskbar() {
  return (
    <footer className="flex h-[27px] shrink-0 items-center bg-[linear-gradient(90deg,#1c1c1c_75%,#23233a_84%,#1e1e28)] text-white">
      <button aria-label="시작" className="flex h-full w-8 items-center justify-center">
        <svg viewBox="0 0 12 12" className="size-3" fill="#fff">
          <path d="M0 1.700 5 1v4.700H0zM5.700.900 12 0v5.700H5.700zM0 6.300h5V11l-5-.7zM5.700 6.300H12V12l-6.300-.9z" />
        </svg>
      </button>
      <div className="flex h-full w-[229px] items-center bg-[#f3f3f3] pr-1 pl-2 text-[#333333]">
        <Search className="size-3 -scale-x-100" strokeWidth={1.5} />
        <input aria-label="검색" placeholder="검색하려면 여기에 입력하세요." className="ml-2 w-[150px] text-[11px] outline-none placeholder:text-[#444444]" />
        <svg viewBox="0 0 44 18" className="ml-auto h-[18px] w-11">
          <path d="M18 1q1.500 7 8 8-6.500 1-8 8-1.500-7-8-8 6.500-1 8-8z" fill="#f5b921" />
          <path d="M33 6q.8 4 4 4.500-3.200.5-4 4.500-.8-4-4-4.500 3.200-.5 4-4.500z" fill="#f7cf4a" />
          <path d="M5 10q.5 3 3 3.500Q5.500 14 5 17q-.5-3-3-3.500Q4.500 13 5 10z" fill="#3aa0c8" />
          <circle cx="28" cy="2.500" r="1.200" fill="#c08060" />
          <circle cx="40" cy="15" r="1.200" fill="#8ab060" />
        </svg>
      </div>
      <TaskIcon name="작업 보기">
        <svg viewBox="0 0 12 12" className="size-3" fill="none" stroke="#fff">
          <path d="M.5 0v2h6V0M.5 12v-2h6v2M.5 4h6v4h-6zM10 0v2.500M10 6v6M8.500 4.500h3" />
        </svg>
      </TaskIcon>
      <TaskIcon name="Copilot"><Copilot className="size-[15px]" /></TaskIcon>
      <TaskIcon name="Edge" state="open">
        <svg viewBox="0 0 16 16" className="size-4">
          <circle cx="8" cy="8" r="8" fill="#1d7fd0" />
          <path d="M.3 7A8 8 0 0 1 16 7.500c0 3-3 3.800-5.500 3-1-.4-.5-1 0-2C10.500 6 8 4.800 5.500 5 3 5.200 1 6 .3 7z" fill="#3fd0a0" />
          <path d="M5.500 8.500C5 12 8 14.500 13 13q-2 3-5.500 3C3 15.500 2 11 5.500 8.500z" fill="#1450a0" />
          <path d="M6.500 7.500q2-1.500 3.600.5-.5 1.500.4 2.500 1.500 1 4 .3-3 2-6 .7-2.500-1.500-2-4z" fill="#e8f6fa" />
        </svg>
      </TaskIcon>
      <TaskIcon name="파일 탐색기" state="open">
        <svg viewBox="0 0 16 14" className="h-[14px] w-4">
          <path d="M0 1h6l1.500 2H16v10H0z" fill="#f3c64b" />
          <path d="M0 5h16v8H0z" fill="#fbdc7c" />
          <path d="M3 8h10v5h-2.500v-2.500h-5V13H3z" fill="#3d9bc9" />
        </svg>
      </TaskIcon>
      <TaskIcon name="PowerShell" state="open">
        <svg viewBox="0 0 16 13" className="h-[13px] w-4">
          <path d="M3 0h13l-3 13H0z" fill="#3c6fc4" />
          <path d="m5 2.500 4 4-5 4M8.500 10.500H12" fill="none" stroke="#fff" strokeWidth="1.400" />
        </svg>
      </TaskIcon>
      <TaskIcon name="메모장" state="active">
        <svg viewBox="0 0 16 14" className="h-[14px] w-4">
          <path d="M4 1h11l-3 11H1z" fill="#a8dbe2" />
          <path d="m15 1 1 1-3 11H2l-1-1h11z" fill="#4d8e9b" />
        </svg>
      </TaskIcon>
      <TaskIcon name="OBS" state="open">
        <svg viewBox="0 0 16 16" className="size-4" fill="none" stroke="#ddd">
          <circle cx="8" cy="8" r="7" />
          <path d="M5 3q0 4 3.500 5T14 6M8.500 8Q5 9 5 13M8.500 8Q5 5 1.500 9" />
          <circle cx="12" cy="12" r="4" fill="#e01010" stroke="none" />
        </svg>
      </TaskIcon>
      <TaskIcon name="NEWWORLD" state="open">
        <span className="flex size-[17px] items-center justify-center bg-white"><WMark className="size-[13px]" /></span>
      </TaskIcon>
      <TaskIcon name="Chrome" state="open">
        <svg viewBox="0 0 16 16" className="size-4">
          <circle cx="8" cy="8" r="8" fill="#2da94f" />
          <path d="M1.100 4A8 8 0 0 1 14.900 4H8L4.500 10z" fill="#e33b2e" />
          <path d="M14.900 4A8 8 0 0 1 8 16l3.500-6L8 4z" fill="#fbc116" />
          <circle cx="8" cy="8" r="3.800" fill="#fff" />
          <circle cx="8" cy="8" r="2.900" fill="#2f7de1" />
        </svg>
      </TaskIcon>
      <div className="ml-auto flex items-center gap-[4px] pr-[13px]">
        <ChevronUp className="mr-[2px] size-3" strokeWidth={1.5} />
        <svg viewBox="0 0 12 12" className="size-3" fill="none" stroke="#fff">
          <path d="M3 1.500h6M2 4h7v4q0 2-2 2H4Q2 10 2 8zM9 5h2v3H9M4 6.500h3" />
        </svg>
        <Monitor className="size-3" strokeWidth={1.5} />
        <Volume2 className="size-3" strokeWidth={1.5} />
        <span className="ml-[2px] text-[10px]">가</span>
        <time className="ml-[6px] w-[46px] text-center text-[9px] leading-[12px] whitespace-nowrap">
          오후 5:15
          <br />
          2026-08-13
        </time>
        <svg viewBox="0 0 16 16" className="ml-2 size-4">
          <path d="M0 1h11v9H6l-2.500 3v-3H0z" fill="#fff" />
          <path d="M2 3.500h7M2 5.500h7M2 7.500h7" stroke="#222" strokeWidth=".8" />
          <circle cx="11" cy="11" r="4.500" fill="#333" stroke="#aaa" strokeWidth=".7" />
          <text x="11" y="13.500" textAnchor="middle" fontSize="7" fill="#fff">3</text>
        </svg>
      </div>
    </footer>
  );
}

export default function App() {
  return (
    <div className="relative flex h-screen w-full flex-col overflow-hidden font-['Open_Sans','Noto_Sans_CJK_KR',sans-serif]">
      <BotWindow />
      <Taskbar />
      <BoardWindow />
      <Notepad />
      <BrowserWindow />
      <div className="absolute top-[630px] left-[1003px] whitespace-nowrap text-[#b4b4b4]">
        <p className="text-[14px] leading-4">Windows 정품 인증</p>
        <p className="font-['Lato','Noto_Sans_CJK_KR',sans-serif] text-[11px] leading-4">[설정]으로 이동하여 Windows를 정품 인증합니다.</p>
      </div>
      <svg viewBox="0 0 10 14" className="absolute top-[457px] left-[1269px] h-[14px] w-[10px]">
        <path d="M.5.500v11l2.600-2.400 1.700 4 1.800-.8-1.700-3.800h3.600z" fill="#fff" stroke="#222" strokeWidth=".7" />
      </svg>
    </div>
  );
}
